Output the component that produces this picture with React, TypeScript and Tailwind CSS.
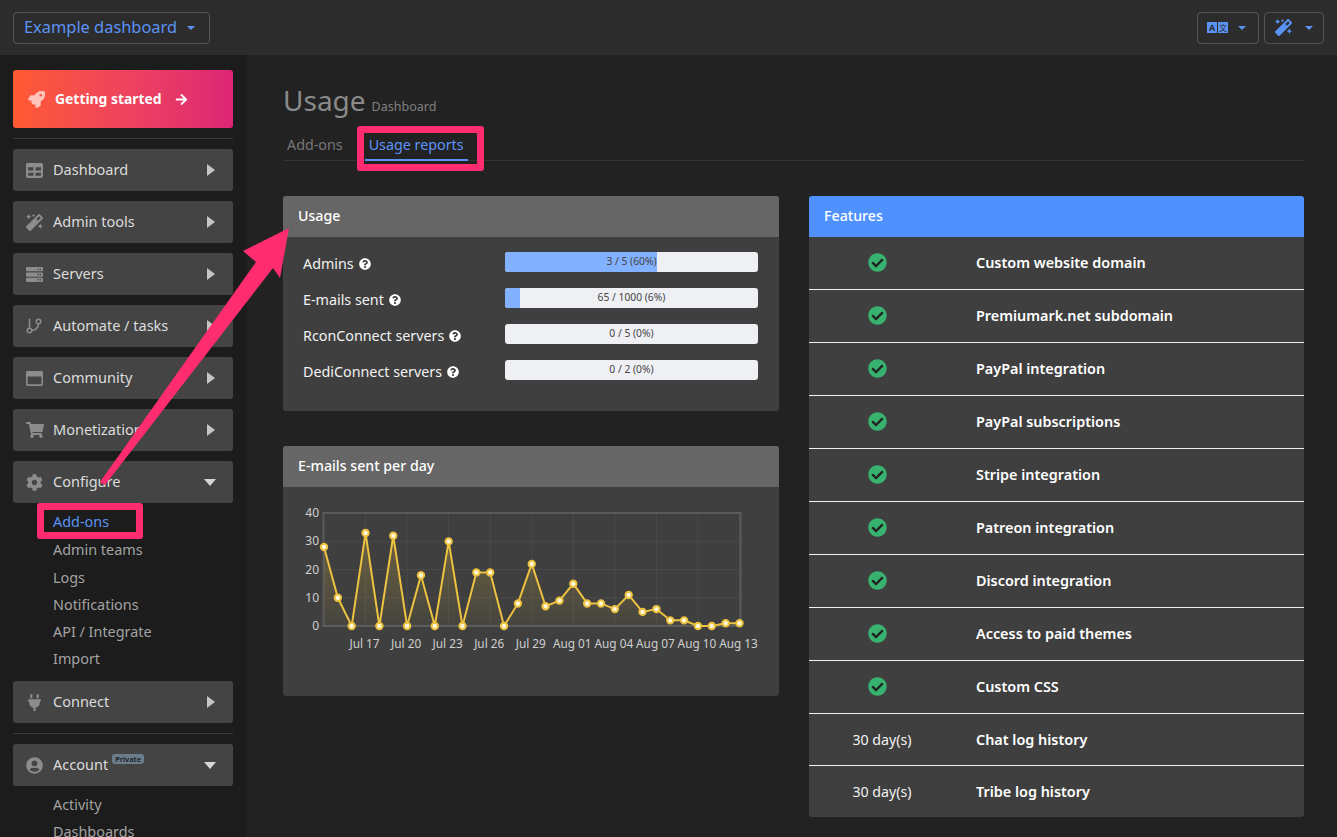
import {GitBranch} from "lucide-react";
import {
  FaArrowRight,
  FaCheckCircle,
  FaCog,
  FaMagic,
  FaPlug,
  FaQuestionCircle,
  FaRegWindowMaximize,
  FaRocket,
  FaServer,
  FaShoppingCart,
  FaTable,
  FaUserCircle,
} from "react-icons/fa";
import type {ReactNode} from "react";

const font = "font-['Noto_Sans',sans-serif]";

const Caret: React.FC<{className?: string}> = ({className}) => (
  <span
    className={`inline-block h-0 w-0 border-x-[4px] border-t-[4px] border-x-transparent border-t-[#5b93f5] ${className ?? ""}`}
  />
);

const LanguageIcon: React.FC = () => (
  <svg width="21" height="11" viewBox="0 0 21 11" className="block">
    <rect width="10" height="11" fill="#5b93f5" />
    <rect x="11" width="10" height="11" fill="#5b93f5" />
    <text x="5" y="9" textAnchor="middle" fontSize="9" fontWeight="700" fill="#2c2c2c" fontFamily="Noto Sans, sans-serif">
      A
    </text>
    <text x="16" y="9" textAnchor="middle" fontSize="8" fill="#2c2c2c" fontFamily="Noto Sans CJK SC, sans-serif">
      文
    </text>
  </svg>
);

interface NavItemProps {
  icon: ReactNode;
  label: ReactNode;
  open?: boolean;
}

const NavItem: React.FC<NavItemProps> = ({icon, label, open}) => (
  <div className="flex h-[42px] shrink-0 items-center rounded-[3px] bg-[#444444] pl-[13px] pr-[17px] text-[14.5px] text-[#dcdcdc]">
    <span className="flex w-[27px] shrink-0 items-center text-[#8c8c8c]">{icon}</span>
    <span className="flex-1">{label}</span>
    {open ? (
      <span className="h-0 w-0 border-x-[6px] border-t-[7px] border-x-transparent border-t-[#d6d6d6]" />
    ) : (
      <span className="mr-[1px] h-0 w-0 border-y-[6px] border-l-[8px] border-y-transparent border-l-[#c4c4c4]" />
    )}
  </div>
);

const SubItem: React.FC<{children: ReactNode; active?: boolean; h?: string}> = ({
  children,
  active,
  h = "h-[27px]",
}) => (
  <div
    className={`flex ${h} shrink-0 items-center pl-[40px] text-[14.4px] ${active ? "text-[#5b93f5]" : "text-[#a3a3a3]"}`}
  >
    {children}
  </div>
);

const Sidebar: React.FC = () => (
  <aside className="flex h-[782px] w-[247px] shrink-0 flex-col overflow-hidden bg-[#1c1c1c] pl-[13px] pr-[14px] pt-[15px]">
    <div className="flex h-[58px] shrink-0 items-center rounded-[3px] bg-gradient-to-r from-[#ff5a30] to-[#dd2476] pl-[15px] text-[13.9px] font-bold text-white">
      <FaRocket className="mr-[10px] text-[17px] text-[#ffc4bb]" />
      <span>Getting started</span>
      <FaArrowRight className="ml-[13px] text-[13px]" />
    </div>
    <div className="mb-[10px] mt-[10px] h-px shrink-0 bg-[#3a3a3a]" />
    <div className="flex shrink-0 flex-col gap-[10px]">
      <NavItem icon={<FaTable className="text-[17px]" />} label="Dashboard" />
      <NavItem icon={<FaMagic className="text-[17px]" />} label="Admin tools" />
      <NavItem icon={<FaServer className="text-[17px]" />} label="Servers" />
      <NavItem icon={<GitBranch size={18} strokeWidth={2} className="-ml-[1px]" />} label="Automate / tasks" />
      <NavItem icon={<FaRegWindowMaximize className="text-[17px]" />} label="Community" />
      <NavItem icon={<FaShoppingCart className="text-[18px]" />} label="Monetization" />
      <NavItem icon={<FaCog className="text-[17px]" />} label="Configure" open />
    </div>
    <div className="mt-[5px] flex shrink-0 flex-col">
      <SubItem active h="h-[28px]">Add-ons</SubItem>
      <SubItem h="h-[28px]">Admin teams</SubItem>
      <SubItem>Logs</SubItem>
      <SubItem>Notifications</SubItem>
      <SubItem>API / Integrate</SubItem>
      <SubItem h="h-[28px]">Import</SubItem>
    </div>
    <div className="mt-[8px] shrink-0">
      <NavItem icon={<FaPlug className="text-[17px]" />} label="Connect" />
    </div>
    <div className="mb-[10px] mt-[10px] h-px shrink-0 bg-[#3a3a3a]" />
    <NavItem
      icon={<FaUserCircle className="text-[17px]" />}
      label={
        <span className="relative inline-block">
          Account
          <span className="absolute left-[calc(100%+4px)] top-0 rounded-[3px] bg-[#6a7d8c] px-[3px] text-[7.5px] font-semibold leading-[10px] text-[#1c1c1c]">
            Private
          </span>
        </span>
      }
      open
    />
    <div className="mt-[5px] flex shrink-0 flex-col">
      <SubItem>Activity</SubItem>
      <SubItem>Dashboards</SubItem>
    </div>
  </aside>
);

const Card: React.FC<{title: string; blue?: boolean; className?: string; children: ReactNode}> = ({
  title,
  blue,
  className,
  children,
}) => (
  <section className={`overflow-hidden rounded-[3px] bg-[#3f3f3f] ${className ?? ""}`}>
    <header
      className={`flex h-[41px] items-center px-[15px] pb-[2px] text-[14.2px] font-medium text-white ${blue ? "bg-[#4f92ff]" : "bg-[#666666]"}`}
    >
      {title}
    </header>
    {children}
  </section>
);

const usage = [
  {label: "Admins", text: "3 / 5 (60%)", pct: 60},
  {label: "E-mails sent", text: "65 / 1000 (6%)", pct: 6},
  {label: "RconConnect servers", text: "0 / 5 (0%)", pct: 0},
  {label: "DediConnect servers", text: "0 / 2 (0%)", pct: 0},
];

const UsageRow: React.FC<(typeof usage)[number]> = ({label, text, pct}) => (
  <div className="flex h-[36px] items-center pl-[20px] pr-[21px]">
    <div className="flex w-[202px] shrink-0 items-center pt-[4px] text-[14.3px] text-[#f2f2f2]">
      {label}
      <FaQuestionCircle className="ml-[5px] text-[12px] text-white" />
    </div>
    <div className="relative flex h-[20px] flex-1 items-center justify-center overflow-hidden rounded-[3px] bg-[#eff0f4] text-[10.3px] text-[#444444]">
      <div className="absolute inset-y-0 left-0 bg-[#82b1ff]" style={{width: `${pct}%`}} />
      <span className="relative">{text}</span>
    </div>
  </div>
);

const values = [28, 10, 0, 33, 0, 32, 0, 18, 0, 30, 0, 19, 19, 0, 8, 22, 7, 9, 15, 8, 8, 6, 11, 5, 6, 2, 2, 0, 0, 1, 1];

// chart box, measured from the card's top left corner
const chartX = (i: number) => 41 + i * 13.85;
const chartY = (v: number) => 139 - v * 2.82;

const EmailChart: React.FC = () => {
  const line = values.map((v, i) => `${chartX(i)},${chartY(v)}`).join(" ");
  const area = `${chartX(0)},${chartY(0)} ${line} ${chartX(30)},${chartY(0)}`;
  const yTicks = [0, 10, 20, 30, 40];
  const xTicks = [
    [3, "Jul 17"],
    [6, "Jul 20"],
    [9, "Jul 23"],
    [12, "Jul 26"],
    [15, "Jul 29"],
    [18, "Aug 01"],
    [21, "Aug 04"],
    [24, "Aug 07"],
    [27, "Aug 10"],
    [30, "Aug 13"],
  ] as const;

  return (
    <svg width="496" height="209" className="block">
      <defs>
        <linearGradient id="chart-fill" x1="0" y1="0" x2="0" y2="1">
          <stop offset="0" stopColor="#f2c53d" stopOpacity="0.25" />
          <stop offset="1" stopColor="#f2c53d" stopOpacity="0.04" />
        </linearGradient>
      </defs>
      {yTicks.map((t) => (
        <g key={t}>
          <line x1="41" x2="457" y1={chartY(t)} y2={chartY(t)} stroke="#4a4a4a" strokeWidth="1" />
          <text x="36" y={chartY(t) + 4} textAnchor="end" fontSize="12" fill="#cfcfcf">
            {t}
          </text>
        </g>
      ))}
      {xTicks.map(([i, name]) => (
        <g key={name}>
          <line x1={chartX(i)} x2={chartX(i)} y1="26" y2="139" stroke="#4a4a4a" strokeWidth="1" />
          <text x={chartX(i) - 1} y="161" textAnchor="middle" fontSize="11.8" fill="#cfcfcf">
            {name}
          </text>
        </g>
      ))}
      <rect x="40.5" y="26" width="417" height="113" fill="none" stroke="#5a5a5a" strokeWidth="2" />
      <polygon points={area} fill="url(#chart-fill)" />
      <polyline points={line} fill="none" stroke="#edc240" strokeWidth="2" />
      {values.map((v, i) => (
        <circle key={i} cx={chartX(i)} cy={chartY(v)} r="3.2" fill="#fff8dc" stroke="#edc240" strokeWidth="2" />
      ))}
    </svg>
  );
};

const features: [string | null, string][] = [
  [null, "Custom website domain"],
  [null, "Premiumark.net subdomain"],
  [null, "PayPal integration"],
  [null, "PayPal subscriptions"],
  [null, "Stripe integration"],
  [null, "Patreon integration"],
  [null, "Discord integration"],
  [null, "Access to paid themes"],
  [null, "Custom CSS"],
  ["30 day(s)", "Chat log history"],
  ["30 day(s)", "Tribe log history"],
];

const FeatureRow: React.FC<{value: string | null; name: string; height: string; last: boolean}> = ({
  value,
  name,
  height,
  last,
}) => (
  <div className={`flex items-center pb-[2px] ${height} ${last ? "" : "border-b border-[#f0f0f0]"}`}>
    <div className="mr-[21px] flex w-[146px] shrink-0 justify-center text-[14.2px] text-[#f2f2f2]">
      {value ? (
        <span className="mt-[2px]">{value}</span>
      ) : (
        <span className="relative mr-[10px] flex h-[19px] w-[19px] items-center justify-center">
          <span className="absolute inset-[3px] rounded-full bg-[#222]" />
          <FaCheckCircle className="relative text-[19px] text-[#38b26f]" />
        </span>
      )}
    </div>
    <span className="mt-[2px] text-[14.4px] font-semibold text-white">{name}</span>
  </div>
);

const Highlights: React.FC = () => (
  <>
    <div className="absolute left-[37px] top-[503px] h-[36px] w-[106px] rounded-[3px] border-[7px] border-[#ff2d6f]" />
    <div className="absolute left-[357px] top-[126px] h-[45px] w-[127px] rounded-[3px] border-[7px] border-[#ff2d6f]" />
    <svg width="1337" height="837" className="pointer-events-none absolute left-0 top-0">
      <polygon points="100,482 256,262 243,251 289,228 280,278 273,268 105,485" fill="#ff2d6f" />
    </svg>
  </>
);

export default function App() {
  return (
    <div className={`relative flex h-[837px] w-[1337px] flex-col overflow-hidden bg-[#222222] ${font}`}>
      <header className="flex h-[55px] shrink-0 items-center justify-between bg-[#2c2c2c] pl-[13px] pr-[13px]">
        <div className="flex h-[32px] w-[197px] items-center rounded-[4px] border border-[#555555] pl-[10px] text-[16.4px] text-[#5b93f5]">
          Example dashboard
          <Caret className="ml-[10px]" />
        </div>
        <div className="flex gap-[5px]">
          <div className="flex h-[32px] w-[62px] items-center rounded-[4px] border border-[#555555] pl-[9px]">
            <LanguageIcon />
            <Caret className="ml-[10px]" />
          </div>
          <div className="flex h-[32px] w-[60px] items-center rounded-[4px] border border-[#555555] pl-[10px]">
            <FaMagic className="text-[17px] text-[#5b93f5]" />
            <Caret className="ml-[13px]" />
          </div>
        </div>
      </header>

      <div className="flex flex-1">
        <Sidebar />
        <main className="flex-1 pl-[36px] pr-[33px] pt-[25px]">
          <div className="flex items-baseline gap-[6px]">
            <h1 className="text-[28px] leading-[40px] text-[#8a8a8a]">Usage</h1>
            <span className="text-[12.5px] text-[#808080]">Dashboard</span>
          </div>
          <nav className="flex h-[41px] border-b border-[#333333] pl-[4px] text-[14.3px]">
            <span className="pt-[14px] leading-[21px] text-[#777777]">Add-ons</span>
            <span className="ml-[22px] h-[41px] border-b-2 border-[#5b93f5] px-[4px] pt-[14px] leading-[21px] text-[#5b93f5]">
              Usage reports
            </span>
          </nav>

          <div className="mt-[35px] flex gap-[30px]">
            <div className="flex w-[496px] shrink-0 flex-col gap-[35px]">
              <Card title="Usage" className="h-[215px]">
                <div className="pt-[7px]">
                  {usage.map((row) => (
                    <UsageRow key={row.label} {...row} />
                  ))}
                </div>
              </Card>
              <Card title="E-mails sent per day" className="h-[250px]">
                <EmailChart />
              </Card>
            </div>
            <Card title="Features" blue className="h-[621px] flex-1">
              {features.map(([value, name], i) => (
                <FeatureRow
                  key={name}
                  value={value}
                  name={name}
                  height={i === 10 ? "h-[51px]" : i === 9 ? "h-[52px]" : "h-[53px]"}
                  last={i === features.length - 1}
                />
              ))}
            </Card>
          </div>
        </main>
      </div>

      <Highlights />
    </div>
  );
}
